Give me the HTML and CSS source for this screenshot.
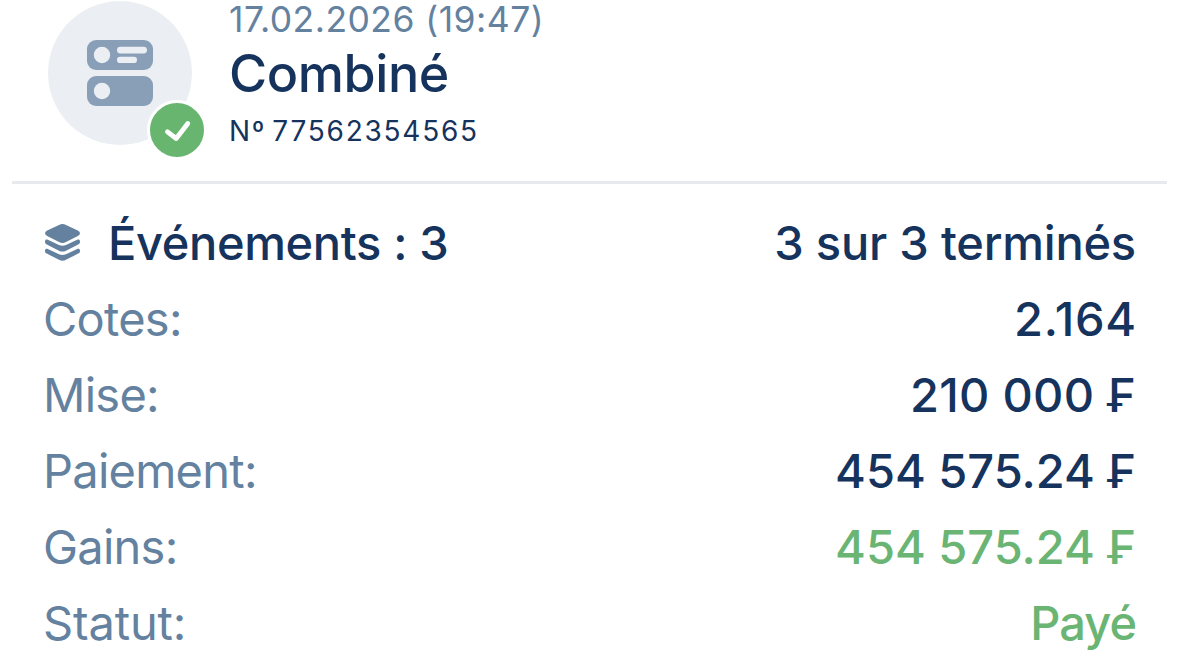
FILE: index.html
```html
<!DOCTYPE html>
<html lang="fr">
<head>
  <meta charset="UTF-8" />
  <meta name="viewport" content="width=device-width, initial-scale=1.0" />
  <title>Combiné</title>
  <link rel="stylesheet" href="styles.css">
</head>
<body>
  <div class="ticket">
    <header class="ticket-header">
      <div class="ticket-icon">
        <svg class="combo" viewBox="0 0 66 66">
          <rect x="0" y="0" width="66" height="30" rx="9" fill="#889fb7"/>
          <rect x="0" y="36" width="66" height="30" rx="9" fill="#889fb7"/>
          <circle cx="15" cy="15" r="8.2" fill="#ebeff4"/>
          <circle cx="15" cy="51" r="8.2" fill="#ebeff4"/>
          <rect x="30" y="6.7" width="30" height="6.8" rx="3.4" fill="#ebeff4"/>
          <rect x="30" y="16.7" width="20" height="6.3" rx="3.1" fill="#ebeff4"/>
        </svg>
        <span class="badge">
          <svg viewBox="0 0 54 54">
            <path d="M17.5 28.8L26.2 35.5L37.8 20.5" fill="none" stroke="#fff" stroke-width="4.8" stroke-linecap="round" stroke-linejoin="round"/>
          </svg>
        </span>
      </div>
      <div class="ticket-info">
        <div class="date">17.02.2026 (19:47)</div>
        <h1>Combiné</h1>
        <div class="number">Nº 77562354565</div>
      </div>
    </header>

    <div class="rows">
      <div class="row">
        <span class="title">
          <svg class="layers" viewBox="0 0 35 37">
            <path d="M14 .9Q17.500 -.7 21 .9L32.800 6.400Q35 7.600 35 9.200Q35 10.800 32.800 11.900L21 18Q17.500 19.800 14 18L2.200 11.900Q0 10.800 0 9.200Q0 7.600 2.200 6.400Z"/>
            <path id="band" d="M0 17.300C.2 15.600 1.400 15.200 2.800 15.800L14 21.100Q17.500 22.600 21 21.100L32.200 15.800C33.600 15.200 34.800 15.600 35 17.300C35.100 19 34.600 19.800 33.200 20.500L21 26.700Q17.500 28.400 14 26.700L1.800 20.500C.4 19.800-.1 19 0 17.300Z"/>
            <use href="#band" y="9.1"/>
          </svg>
          <span>Événements : 3</span>
        </span>
        <span class="value summary">3 sur 3 terminés</span>
      </div>
      <div class="row">
        <span class="label">Cotes:</span>
        <span class="value odds">2.164</span>
      </div>
      <div class="row">
        <span class="label">Mise:</span>
        <span class="value stake">210 000 ₣</span>
      </div>
      <div class="row">
        <span class="label">Paiement:</span>
        <span class="value">454 575.24 ₣</span>
      </div>
      <div class="row">
        <span class="label">Gains:</span>
        <span class="value green">454 575.24 ₣</span>
      </div>
      <div class="row">
        <span class="label status-label">Statut:</span>
        <span class="value green status">Payé</span>
      </div>
    </div>
  </div>
</body>
</html>
```
FILE: styles.css
```css
body {
  margin: 0;
  background-color: #fff;
  color: #15335d;
  font-family: Inter, sans-serif;
  overflow: hidden;
}
.ticket-header {
  display: flex;
  align-items: flex-start;
  gap: 37px;
  height: 184px;
  margin: 0 12px;
  padding: 0 36px;
  border-bottom: 3px solid #e7e9ee;
  box-sizing: border-box;
}
.ticket-icon {
  position: relative;
  display: flex;
  align-items: center;
  justify-content: center;
  width: 144px;
  height: 144px;
  margin-top: 1px;
  border-radius: 50%;
  background-color: #ebeff4;
}
.combo {
  width: 66px;
  height: 66px;
}
.badge {
  position: absolute;
  right: -15px;
  bottom: -15px;
  width: 54px;
  height: 54px;
  border: 3px solid #fff;
  border-radius: 50%;
  background-color: #68b570;
}
.badge svg {
  display: block;
}
.date {
  height: 40px;
  line-height: 40px;
  color: #64829f;
  font-size: 35.5px;
  letter-spacing: 0.45px;
}
h1 {
  margin: 0;
  font-size: 52px;
  font-weight: 500;
  line-height: 68px;
  letter-spacing: -0.4px;
}
.number {
  font-size: 28px;
  line-height: 46px;
  letter-spacing: 1.75px;
  word-spacing: -3.5px;
}
.rows {
  padding: 20px 43px 0;
}
.row {
  display: flex;
  align-items: center;
  justify-content: space-between;
  height: 76px;
  font-size: 47px;
}
.title {
  display: flex;
  align-items: center;
  gap: 28px;
  font-weight: 500;
  letter-spacing: -0.35px;
  font-feature-settings: "calt" 0;
}
.layers {
  width: 35px;
  height: 37px;
  margin-top: 1px;
  margin-left: 2px;
  fill: #64829f;
}
.label {
  color: #64829f;
  letter-spacing: -0.75px;
}
.status-label {
  letter-spacing: -0.15px;
}
.value {
  font-weight: 500;
}
.summary {
  letter-spacing: -0.2px;
}
.odds {
  margin-right: -1px;
  letter-spacing: 0.8px;
}
.stake {
  letter-spacing: 0.3px;
}
.green {
  color: #6ab573;
}
.status {
  letter-spacing: -1px;
}
```
